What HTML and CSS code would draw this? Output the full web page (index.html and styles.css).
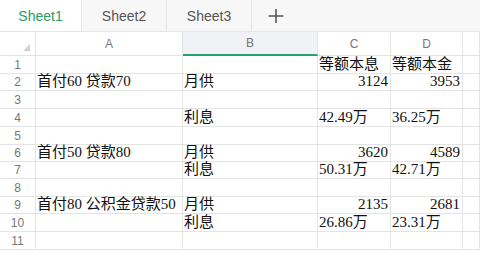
FILE: index.html
```html
<!DOCTYPE html>
<html lang="zh-CN">
<head>
    <meta charset="UTF-8">
    <title>Sheet1</title>
    <link rel="stylesheet" href="styles.css">
</head>
<body>

<!-- Sheet tabs -->
<div class="tabs">
    <div class="tab active">Sheet1</div>
    <div class="tab">Sheet2</div>
    <div class="tab">Sheet3</div>
    <div class="tab add">
        <svg width="20" height="16" viewBox="0 0 20 16">
            <path d="M10 1 V15 M2.5 8 H17.5" stroke="#555" stroke-width="1.6" fill="none"/>
        </svg>
    </div>
</div>

<!-- Grid -->
<div class="sheet">
    <div class="corner"><span class="tri"></span></div>
    <div class="colhead">A</div>
    <div class="colhead selected">B</div>
    <div class="colhead">C</div>
    <div class="colhead">D</div>
    <div class="colhead"></div>

    <div class="rowhead">1</div>
    <div class="cell"></div>
    <div class="cell"></div>
    <div class="cell">等额本息</div>
    <div class="cell">等额本金</div>
    <div class="cell"></div>

    <div class="rowhead">2</div>
    <div class="cell">首付60 贷款70</div>
    <div class="cell">月供</div>
    <div class="cell num">3124</div>
    <div class="cell num">3953</div>
    <div class="cell"></div>

    <div class="rowhead">3</div>
    <div class="cell"></div>
    <div class="cell"></div>
    <div class="cell"></div>
    <div class="cell"></div>
    <div class="cell"></div>

    <div class="rowhead">4</div>
    <div class="cell"></div>
    <div class="cell">利息</div>
    <div class="cell">42.49万</div>
    <div class="cell">36.25万</div>
    <div class="cell"></div>

    <div class="rowhead">5</div>
    <div class="cell"></div>
    <div class="cell"></div>
    <div class="cell"></div>
    <div class="cell"></div>
    <div class="cell"></div>

    <div class="rowhead">6</div>
    <div class="cell">首付50 贷款80</div>
    <div class="cell">月供</div>
    <div class="cell num">3620</div>
    <div class="cell num">4589</div>
    <div class="cell"></div>

    <div class="rowhead">7</div>
    <div class="cell"></div>
    <div class="cell">利息</div>
    <div class="cell">50.31万</div>
    <div class="cell">42.71万</div>
    <div class="cell"></div>

    <div class="rowhead">8</div>
    <div class="cell"></div>
    <div class="cell"></div>
    <div class="cell"></div>
    <div class="cell"></div>
    <div class="cell"></div>

    <div class="rowhead">9</div>
    <div class="cell">首付80 公积金贷款50</div>
    <div class="cell">月供</div>
    <div class="cell num">2135</div>
    <div class="cell num">2681</div>
    <div class="cell"></div>

    <div class="rowhead">10</div>
    <div class="cell"></div>
    <div class="cell">利息</div>
    <div class="cell">26.86万</div>
    <div class="cell">23.31万</div>
    <div class="cell"></div>

    <div class="rowhead">11</div>
    <div class="cell"></div>
    <div class="cell"></div>
    <div class="cell"></div>
    <div class="cell"></div>
    <div class="cell"></div>
</div>

</body>
</html>
```

FILE: styles.css
```css
* {
    box-sizing: border-box;
}

body {
    margin: 0;
    width: 480px;
    height: 256px;
    overflow: hidden;
    background-color: #fff;
    font-family: "Liberation Sans", Arial, sans-serif;
}

.tabs {
    display: flex;
    height: 32px;
    background-color: #f7f7f7;
    border-bottom: 1px solid #e6e6e6;
}

.tab {
    display: flex;
    align-items: center;
    justify-content: center;
    height: 31px;
    border-right: 1px solid #e6e6e6;
    font-size: 14px;
    color: #555;
    width: 85px;
}

.tab.active {
    width: 82px;
    background-color: #fff;
    color: #2e9a68;
}

.tab.add {
    width: 48px;
    border-right: none;
}

.sheet {
    display: grid;
    grid-template-columns: 36px 147px 135px 73px 72px 1fr;
    grid-template-rows: 24px 18px 17px 18px 18px 18px 17px 17px 18px 17px 18px 18px;
}

.corner,
.colhead,
.rowhead,
.cell {
    border-right: 1px solid #e4e4e4;
    border-bottom: 1px solid #e4e4e4;
}

.corner {
    position: relative;
}

.tri {
    position: absolute;
    right: 5px;
    bottom: 4px;
    width: 0;
    height: 0;
    border-left: 7px solid transparent;
    border-bottom: 7px solid #cfcfcf;
}

.colhead {
    display: flex;
    align-items: center;
    justify-content: center;
    font-size: 12px;
    color: #777;
}

.colhead.selected {
    background-color: #f0f2f5;
    border-bottom: 2px solid #27a46e;
}

.rowhead {
    display: flex;
    align-items: center;
    justify-content: center;
    font-size: 12px;
    color: #777;
}

.cell {
    display: flex;
    align-items: flex-end;
    padding: 0 2px 0 1px;
    font-family: "Liberation Serif", "Noto Sans CJK SC", serif;
    font-size: 15px;
    line-height: 17px;
    color: #111;
    white-space: nowrap;
    overflow: visible;
}

.cell.num {
    justify-content: flex-end;
}
```
